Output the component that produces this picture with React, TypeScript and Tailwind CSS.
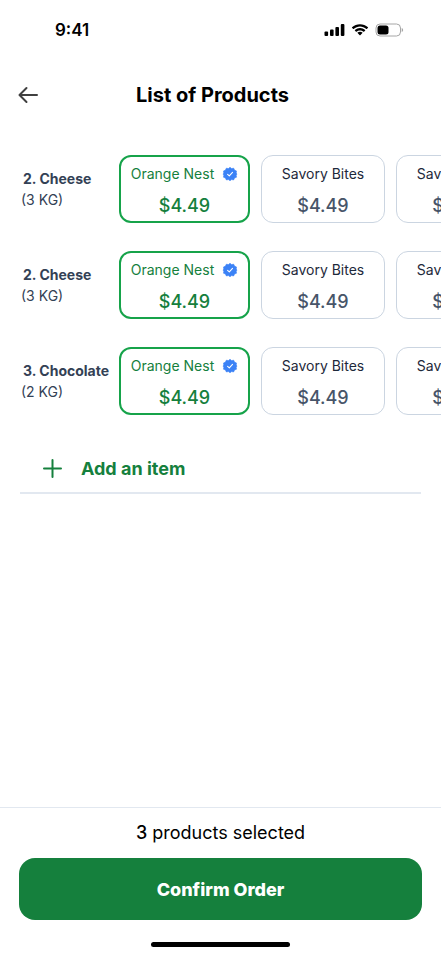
type Option = { name: string; price: string };
type Product = { id: number; label: string; quantity: string; options: Option[] };

const options: Option[] = [
  { name: "Orange Nest", price: "$4.49" },
  { name: "Savory Bites", price: "$4.49" },
  { name: "Savory Bites", price: "$4.49" },
];

const products: Product[] = [
  { id: 1, label: "2. Cheese", quantity: "(3 KG)", options },
  { id: 2, label: "2. Cheese", quantity: "(3 KG)", options },
  { id: 3, label: "3. Chocolate", quantity: "(2 KG)", options },
];

function StatusBar() {
  return (
    <div className="flex h-14 items-center justify-between pt-[3px] pr-[35px] pl-[55px]">
      <span className="text-[17px] leading-5 font-semibold">9:41</span>
      <svg width="82" height="14" viewBox="0 0 82 14" aria-hidden="true">
        <rect x="0.500" y="8.500" width="3.600" height="4.500" rx="1" />
        <rect x="6" y="6.500" width="3.600" height="6.500" rx="1" />
        <rect x="11.400" y="4" width="3.600" height="9" rx="1" />
        <rect x="16.800" y="1" width="3.600" height="12" rx="1" />
        <g transform="translate(27.500 1)">
          <path d="M8.5 2.5c2.3 0 4.6.9 6.3 2.5.1.1.3.1.5 0l1.200-1.200c.1-.1.1-.4 0-.5C12.100-.9 4.900-.9.500 3.300c-.1.100-.1.400 0 .5L1.700 5c.2.100.4.100.5 0C3.900 3.400 6.200 2.500 8.500 2.500Z" />
          <path d="M8.500 6.400c1.300 0 2.500.5 3.500 1.300.1.100.3.100.5 0l1.200-1.200c.1-.1.100-.4 0-.5-2.900-2.700-7.400-2.700-10.300 0-.2.100-.2.400 0 .5L4.500 7.700c.2.100.4.100.5 0 1-.8 2.200-1.300 3.500-1.300Z" />
          <path d="M10.900 9.100c.1-.1.100-.3 0-.5-1.400-1.200-3.400-1.200-4.800 0-.1.200-.1.400 0 .5l2.100 2.100c.2.200.4.200.6 0Z" />
        </g>
        <rect x="52" y="1" width="24.500" height="12" rx="4" fill="none" stroke="#a6a6a6" />
        <rect x="53.500" y="2.500" width="11" height="9" rx="2.500" />
        <path d="M77.700 5v4c.8-.3 1.400-1.100 1.400-2s-.6-1.700-1.400-2Z" fill="#a6a6a6" />
      </svg>
    </div>
  );
}

function VerifiedBadge() {
  return (
    <svg className="shrink-0" width="16" height="16" viewBox="0 0 16 16" aria-hidden="true">
      <path
        d="M8 1.200l1.500 1.400 2.200-.4.800 1.900 2 .9-.3 2.100L15 8l-.8 1.200.3 2-2 .8-.8 1.900-2.200-.3L8 14.800l-1.500-1.200-2.200.3-.8-1.900-2-.8.300-2L1 8l.8-.9L1.500 5l2-.9.800-1.900 2.200.4Z"
        fill="#3b82f6"
        stroke="#3b82f6"
        strokeWidth=".6"
        strokeLinejoin="round"
      />
      <path d="M5.600 8.300l1.700 1.600 3.200-3.500" fill="none" stroke="white" strokeWidth="1.100" strokeLinecap="round" strokeLinejoin="round" />
    </svg>
  );
}

function OptionCard({ option, selected }: { option: Option; selected: boolean }) {
  return (
    <button
      type="button"
      aria-pressed={selected}
      className={
        selected
          ? "flex h-[68px] w-[131px] shrink-0 flex-col items-center justify-center gap-2.5 rounded-xl border-2 border-[#16a34a] pt-1 text-[#15803d]"
          : "flex h-[68px] w-[124px] shrink-0 flex-col items-center justify-center gap-2.5 rounded-xl border border-[#cbd5e1] pt-1 text-[#1e293b]"
      }
    >
      <span className="flex items-center gap-2 text-sm leading-5 whitespace-nowrap">
        {option.name}
        {selected && <VerifiedBadge />}
      </span>
      <span className={selected ? "text-lg leading-6 font-medium" : "text-lg leading-6 font-medium text-[#475569]"}>
        {option.price}
      </span>
    </button>
  );
}

function ProductRow({ product }: { product: Product }) {
  return (
    <li className="flex items-center">
      <div className="w-[119px] shrink-0 pl-[21px] text-sm leading-[21px] text-[#334155]">
        <p className="pl-0.5 font-bold whitespace-nowrap">{product.label}</p>
        <p>{product.quantity}</p>
      </div>
      <div className="flex min-w-0 flex-1 gap-[11px] overflow-x-auto [scrollbar-width:none]">
        {product.options.map((option, index) => (
          <OptionCard key={index} option={option} selected={index === 0} />
        ))}
      </div>
    </li>
  );
}

export default function App() {
  return (
    <div className="flex min-h-screen flex-col bg-white font-['Inter',sans-serif] text-black">
      <StatusBar />
      <header className="grid grid-cols-[24px_1fr_40px] items-center px-4 pt-[25px]">
        <button type="button" aria-label="Go back" className="text-[#404040]">
          <svg width="24" height="24" viewBox="0 0 24 24" fill="none" stroke="currentColor" strokeWidth="2" strokeLinecap="round" strokeLinejoin="round" aria-hidden="true">
            <path d="M21 12H4M10.500 5l-7 7 7 7" />
          </svg>
        </button>
        <h1 className="text-center text-xl leading-7 font-bold">List of Products</h1>
      </header>

      <main className="flex-1 pt-[46px]">
        <ul className="flex flex-col gap-7">
          {products.map((product) => (
            <ProductRow key={product.id} product={product} />
          ))}
        </ul>
        <div className="mx-5 mt-[38px] border-b-2 border-[#e2e8f0] pb-[7px]">
          <button type="button" className="flex items-center gap-[17px] pl-5 text-lg leading-8 font-bold text-[#15803d]">
            <svg width="24" height="24" viewBox="0 0 24 24" fill="none" stroke="currentColor" strokeWidth="2" strokeLinecap="round" aria-hidden="true">
              <path d="M12.500 3v17M4 11.500h17" />
            </svg>
            Add an item
          </button>
        </div>
      </main>

      <footer className="flex flex-col items-center border-t border-[#e2e8f0] px-[19px] pt-3 pb-[9px]">
        <p className="text-lg leading-[26px]">
          <span className="font-medium">3</span> products selected
        </p>
        <button type="button" className="mt-3 h-[62px] w-full rounded-2xl bg-[#15803d] pt-0.5 text-lg font-extrabold text-white">
          Confirm Order
        </button>
        <div className="mt-[22px] h-[5px] w-[139px] rounded-full bg-black" />
      </footer>
    </div>
  );
}
